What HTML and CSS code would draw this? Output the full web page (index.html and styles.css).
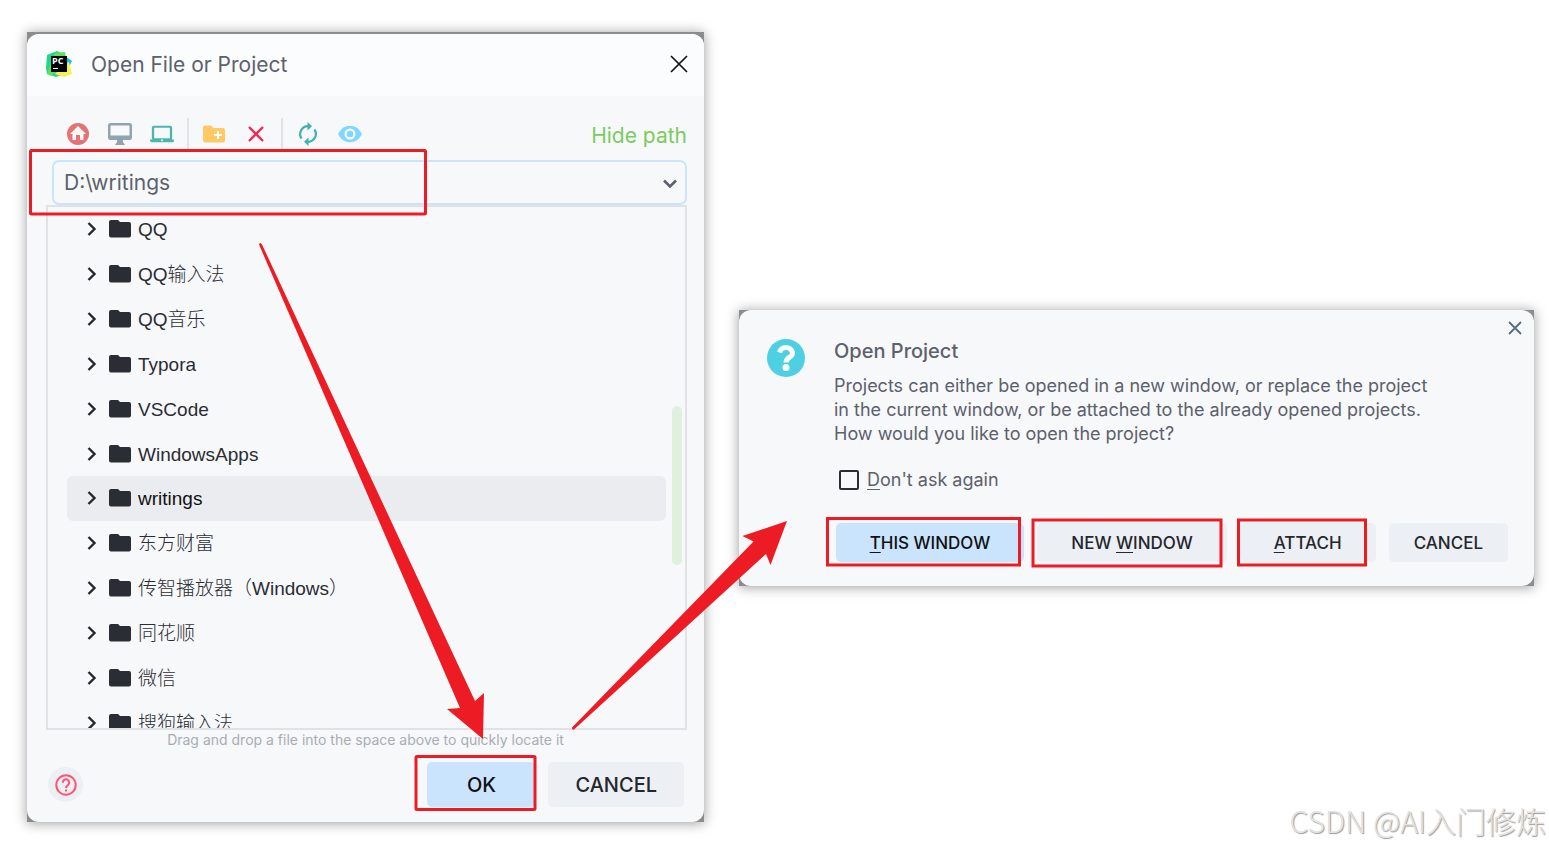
FILE: index.html
```html
<!DOCTYPE html>
<html lang="zh-CN">
<head>
    <meta charset="UTF-8">
    <meta name="viewport" content="width=device-width, initial-scale=1.0">
    <title>Open File or Project</title>
    <link rel="stylesheet" href="styles.css">
</head>
<body>

<main class="desktop">
    <div class="frame file-frame">
        <section class="window file-window">
            <header class="titlebar">
                <svg class="logo" viewBox="0 0 28 28" aria-hidden="true">
                    <path d="M2 5 12 1l6 3 1 20-8 3-9-3-1-6z" fill="#21d789"/>
                    <path d="M10 3 20 2l1 6-8 12-7 6-4-3z" fill="#5fe05a"/>
                    <path d="M20 6l7 5-3 6-6-3z" fill="#07c3f2"/>
                    <path d="M19 14l5-2 3 12-8 3-9-3z" fill="#f4f450"/>
                    <rect x="6" y="6" width="16" height="16" fill="#000"/>
                    <text class="logo-text" x="7" y="14">PC</text>
                    <rect x="8" y="18" width="5" height="1" fill="#fff"/>
                </svg>
                <h1>Open File or Project</h1>
                <button class="icon-button close" aria-label="Close">
                    <svg width="18" height="18" viewBox="0 0 18 18"><path d="M1 1 17 17M17 1 1 17" stroke="#111" stroke-width="1.7" fill="none"/></svg>
                </button>
            </header>

            <div class="toolbar">
                <button class="icon-button" aria-label="Home">
                    <svg width="24" height="24" viewBox="0 0 24 24"><circle cx="12" cy="12" r="11" fill="#e57373"/><path d="M12 4 4 12h2.500v6H10v-5h4v5h3.500v-6H20z" fill="#f7f8fa"/></svg>
                </button>
                <button class="icon-button" aria-label="Desktop">
                    <svg width="24" height="24" viewBox="0 0 24 24"><path d="M2.500 1h19Q24 1 24 3.500v12.500Q24 18 21.500 18H15v2l2 3H7l2-3v-2H2.500Q0 18 0 15.500v-12Q0 1 2.500 1zM2.500 3.500v10h19v-10z" fill="#90a4ae" fill-rule="evenodd"/></svg>
                </button>
                <button class="icon-button" aria-label="Project folder">
                    <svg width="24" height="24" viewBox="0 0 26 24"><path d="M4 3h18q2 0 2 2v12q0 1-1 1h3v1q0 2-2 2H2q-2 0-2-2v-1h3q-1 0-1-1V5q0-2 2-2zM4.500 5.200v11.300h17V5.200z" fill="#4db6ac" fill-rule="evenodd"/><circle cx="13" cy="18.800" r="1" fill="#f7f8fa"/></svg>
                </button>
                <span class="separator"></span>
                <button class="icon-button" aria-label="New folder">
                    <svg width="24" height="24" viewBox="0 0 24 24"><path d="M3 3.500h6l2.500 2.500H21q2 0 2 2v10.500q0 2-2 2H3q-2 0-2-2v-13q0-2 2-2z" fill="#ffca66"/><path d="M16 9v8M12 13h8" stroke="#fff" stroke-width="2"/></svg>
                </button>
                <button class="icon-button" aria-label="Delete">
                    <svg width="24" height="24" viewBox="0 0 24 24"><path d="M5 5 19 19M19 5 5 19" stroke="#f5274f" stroke-width="2.400"/></svg>
                </button>
                <span class="separator"></span>
                <button class="icon-button" aria-label="Refresh">
                    <svg width="24" height="24" viewBox="0 0 24 24"><path d="M12 4.200A7.800 7.800 0 0 0 5.600 16.500M12 19.800A7.800 7.800 0 0 0 18.400 7.500" stroke="#3fb0b5" stroke-width="2.200" fill="none"/><path d="M11.500 0v8.400L16 4.200zM12.500 15.600V24L8 19.800z" fill="#3fb0b5"/></svg>
                </button>
                <button class="icon-button" aria-label="Show hidden files">
                    <svg width="24" height="24" viewBox="0 0 24 24"><path d="M0 12Q4 3.700 12 3.700T24 12Q20 20.300 12 20.300T0 12z" fill="#80d8ff"/><circle cx="12" cy="12" r="4.400" fill="#80d8ff" stroke="#f7f8fa" stroke-width="2.200"/></svg>
                </button>
                <a class="hide-path" href="#">Hide path</a>
            </div>

            <div class="path-field">
                <input type="text" value="D:\writings" aria-label="Path">
                <button class="icon-button" aria-label="Recent paths">
                    <svg width="14" height="10" viewBox="0 0 14 10"><path d="M1 2.500 7 8.500 13 2.500" stroke="#5c616c" stroke-width="2.600" fill="none"/></svg>
                </button>
            </div>

            <div class="tree">
                <ul class="tree-list"></ul>
                <span class="scroll-thumb"></span>
            </div>

            <p class="hint">Drag and drop a file into the space above to quickly locate it</p>

            <footer class="file-actions">
                <button class="help" aria-label="Help">
                    <svg width="22" height="22" viewBox="0 0 22 22" fill="none" stroke="#ff5370" stroke-width="2"><circle cx="11" cy="11" r="9.700"/><path d="M7.800 8.700a3.200 3.200 0 1 1 5.100 2.400Q11 12.300 11 14"/><path d="M11 15.500v2"/></svg>
                </button>
                <button class="button primary">OK</button>
                <button class="button">CANCEL</button>
            </footer>
        </section>
    </div>

    <div class="frame project-frame">
        <section class="window project-window">
            <svg class="question" width="40" height="40" viewBox="0 0 40 40" aria-hidden="true"><circle cx="20" cy="20" r="19" fill="#4dd0e1"/><path d="M13.500 14.500Q15 9.500 20 9.500t6.500 5q0 3-3 4.700-3.500 2-3.500 5.300" stroke="#fff" stroke-width="5" fill="none"/><circle cx="20" cy="29.500" r="3.500" fill="#fff"/></svg>
            <div class="project-body">
                <h2>Open Project</h2>
                <p>Projects can either be opened in a new window, or replace the project<br>in the current window, or be attached to the already opened projects.<br>How would you like to open the project?</p>
                <label class="check"><input type="checkbox"><span><u>D</u>on't ask again</span></label>
            </div>
            <button class="icon-button project-close" aria-label="Close">
                <svg width="14" height="14" viewBox="0 0 14 14"><path d="M1 1 13 13M13 1 1 13" stroke="#546e7a" stroke-width="1.800"/></svg>
            </button>
            <footer class="project-actions">
                <button class="button primary"><u>T</u>HIS WINDOW</button>
                <button class="button">NEW <u>W</u>INDOW</button>
                <button class="button"><u>A</u>TTACH</button>
                <button class="button narrow">CANCEL</button>
            </footer>
        </section>
    </div>
</main>

<svg class="marks" width="1549" height="846" viewBox="0 0 1549 846" aria-hidden="true">
    <g fill="none" stroke="#ed1c24" stroke-width="3">
        <rect x="30.500" y="150.500" width="395" height="63.500" rx="1"/>
        <rect x="416" y="756.500" width="119" height="53" rx="1"/>
        <rect x="827.500" y="518.500" width="192" height="46.500"/>
        <rect x="1033" y="520" width="188" height="46"/>
        <rect x="1238.500" y="520" width="127" height="45"/>
    </g>
    <path d="M259 244.500q1-3 3 0L475 701l9-8-1 46-36-30 13-1z" fill="#ed1c24"/>
    <path d="M572 727.500 753.500 541.500 742.500 536 787 521 770.500 565 766 554 574 729.500q-2 1-2-2z" fill="#ed1c24"/>
</svg>

<div class="watermark">CSDN @AI入门修炼</div>

<script>
    const folders = [
        'QQ', 'QQ输入法', 'QQ音乐', 'Typora', 'VSCode', 'WindowsApps',
        'writings', '东方财富', '传智播放器（Windows）', '同花顺', '微信', '搜狗输入法'
    ];
    const list = document.querySelector('.tree-list');

    folders.forEach(name => {
        const row = document.createElement('li');
        row.className = name === 'writings' ? 'row selected' : 'row';
        row.innerHTML = `
            <svg width="10" height="16" viewBox="0 0 10 16"><path d="M1.500 2 7.500 8 1.500 14" stroke="#24272c" stroke-width="2.400" fill="none"/></svg>
            <svg width="22" height="18" viewBox="0 0 22 18"><path d="M2 0h7l2 2h9q2 0 2 2v11.500q0 2-2 2H2q-2 0-2-2V2q0-2 2-2z" fill="#2a2d33"/></svg>
            <span>${name}</span>`;
        list.appendChild(row);
    });
</script>

</body>
</html>
```

FILE: styles.css
```css
* {
    box-sizing: border-box;
}

body {
    margin: 0;
    min-height: 100vh;
    background-color: #fff;
    font-family: Inter, "Noto Sans CJK SC", sans-serif;
    color: #5c616c;
}

h1, h2, p, ul {
    margin: 0;
    padding: 0;
}

button {
    font-family: inherit;
    border: none;
    cursor: pointer;
}

svg {
    display: block;
    flex: none;
}

.desktop {
    display: grid;
    grid-template-columns: 677fr 795fr;
    gap: 35px;
    align-items: start;
    padding: 32px 15px 24px 27px;
}

.frame {
    background-color: #8c8c8c;
    box-shadow: 0 1px 12px rgba(0, 0, 0, 0.4);
}

.file-frame {
    padding-top: 2px;
}

.project-frame {
    margin-top: 278px;
}

.window {
    background-color: #f7f8fa;
    border-radius: 12px;
    overflow: hidden;
}

.file-window {
    padding-bottom: 15px;
}

.titlebar {
    display: flex;
    align-items: center;
    height: 62px;
    padding: 0 16px 2px 18px;
    background-color: #fbfcfd;
}

.logo {
    width: 28px;
    height: 28px;
    margin-right: 18px;
}

.logo-text {
    font: bold 9px "Open Sans", sans-serif;
    fill: #fff;
}

h1 {
    font-size: 21px;
    font-weight: 400;
}

.icon-button {
    padding: 0;
    background: none;
}

.close {
    margin-left: auto;
}

.toolbar {
    display: flex;
    align-items: center;
    gap: 18px;
    height: 32px;
    margin: 22px 17px 10px 39px;
}

.separator {
    width: 2px;
    height: 32px;
    margin: 0 -5px;
    background-color: #e0e2e5;
}

.hide-path {
    margin-left: auto;
    padding-top: 2px;
    font-size: 21px;
    color: #7ccb62;
    text-decoration: none;
}

.path-field {
    display: flex;
    align-items: center;
    height: 45px;
    margin: 0 17px 0 25px;
    padding: 0 8px 0 10px;
    border: 2px solid #cbe4fd;
    border-radius: 7px;
}

.path-field input {
    flex: 1;
    min-width: 0;
    padding: 0;
    border: none;
    outline: none;
    background: none;
    font: 21px Inter, sans-serif;
    color: #5c616c;
}

.tree {
    position: relative;
    height: 525px;
    margin: 0 17px 0 19px;
    border: 2px solid #e0e2e5;
    overflow: hidden;
}

.tree-list {
    display: grid;
    grid-auto-rows: 1fr;
    height: 538px;
    margin: 0 19px;
    list-style: none;
}

.row {
    display: flex;
    align-items: center;
    padding-left: 20px;
    border-radius: 6px;
    font-family: "Liberation Sans", "Noto Sans CJK SC", sans-serif;
    font-size: 19px;
    font-weight: 300;
    line-height: 24px;
    color: #2a2d33;
}

.row svg + svg {
    margin: 0 7px 0 12px;
}

.row span {
    padding-top: 2px;
}

.selected {
    background-color: #ebecf0;
    color: #111;
}

.scroll-thumb {
    position: absolute;
    top: 199px;
    right: 3px;
    width: 10px;
    height: 159px;
    border-radius: 5px;
    background-color: #dff0dc;
}

.hint {
    font-size: 14px;
    line-height: 20px;
    text-align: center;
    color: #a9adb3;
}

.file-actions {
    display: flex;
    align-items: center;
    justify-content: flex-end;
    gap: 13px;
    margin-top: 12px;
    padding: 0 20px 0 21px;
}

.help {
    display: grid;
    place-items: center;
    width: 35px;
    height: 35px;
    margin-right: auto;
    padding: 0;
    border-radius: 50%;
    background-color: #eceff4;
}

.button {
    padding: 0 34px;
    border-radius: 5px;
    background-color: #eceff4;
    font-weight: 500;
    color: #24272c;
}

.button.primary {
    background-color: #cbe4fd;
    color: #111;
}

.file-actions .button {
    min-width: 108px;
    height: 45px;
    padding: 0 27px;
    font-size: 20px;
}

.project-window {
    display: grid;
    grid-template-columns: 40px 1fr auto;
    column-gap: 28px;
    padding: 11px 12px 24px 27px;
}

.question {
    margin-top: 17px;
}

.project-body {
    padding-top: 18px;
}

h2 {
    font-size: 20px;
    font-weight: 500;
    line-height: 24px;
}

.project-body p {
    margin-top: 11px;
    font-size: 18px;
    line-height: 24px;
    white-space: nowrap;
}

.check {
    display: flex;
    align-items: center;
    gap: 8px;
    margin-top: 22px;
    padding-left: 5px;
    font-size: 18px;
    line-height: 24px;
}

.check input {
    appearance: none;
    width: 20px;
    height: 20px;
    margin: 0;
    border: 2px solid #2a2d33;
    border-radius: 2px;
}

u {
    text-underline-offset: 3px;
    text-decoration-thickness: 1px;
}

.project-close {
    align-self: start;
}

.project-actions {
    grid-column: 1 / -1;
    display: flex;
    justify-content: flex-end;
    gap: 13px;
    margin-top: 31px;
    padding-right: 14px;
}

.project-actions .button {
    height: 39px;
    font-size: 17px;
}

.project-actions .narrow {
    padding: 0 25px;
}

.marks {
    position: absolute;
    top: 0;
    left: 0;
    pointer-events: none;
}

.watermark {
    position: absolute;
    right: 3px;
    bottom: 4px;
    font: 300 30px/44px "Noto Sans CJK SC", sans-serif;
    color: #e2e2e2;
    text-shadow: 1px 1px 1px #999;
}
```
